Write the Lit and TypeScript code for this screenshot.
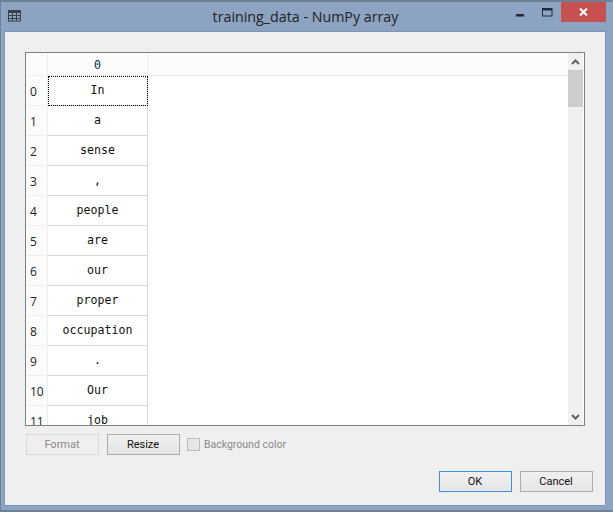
import { LitElement, html, css } from "lit";
import { customElement } from "lit/decorators.js";

const WORDS = ["In", "a", "sense", ",", "people", "are", "our", "proper", "occupation", ".", "Our", "job"];

@customElement("app-root")
export class AppRoot extends LitElement {
  static styles = css`
    :host { display: block; width: 613px; height: 512px; overflow: hidden; font-family: "Open Sans", "Noto Sans", sans-serif; }
    * { box-sizing: border-box; }
    .window { width: 613px; height: 512px; background: #8ca3c1; border: 1px solid #6f7f94; border-top-width: 2px; border-bottom-width: 2px; border-right-color: #8ca3c1; display: flex; flex-direction: column; padding: 0 6px 4px 3px; }
    .titlebar { height: 29px; flex: none; display: flex; align-items: flex-start; position: relative; margin-right: -4px; }
    .appicon { margin: 8px 0 0 3px; display: block; }
    .title { position: absolute; left: 0; right: 0; top: 5px; text-align: center; font-size: 14.25px; line-height: 20px; color: #222; padding-right: 3px; }
    .controls { margin-left: auto; display: flex; align-items: flex-start; margin-right: 4px; }
    .ctl { display: block; }
    .min { margin: 12px 0 0 0; }
    .max { margin: 6px 0 0 18px; }
    .close { width: 45px; height: 20px; margin: 0 0 0 8px; background: #c75050; display: flex; align-items: center; justify-content: center; }
    .client { flex: 1; background: #efefef; border: 1px solid #7f94b3; padding: 20px 20px 0 20px; display: flex; flex-direction: column; min-height: 0; }
    .table { width: 560px; height: 374px; flex: none; background: #fff; border: 1px solid #7c8087; display: flex; overflow: hidden; }
    .grid { flex: 1; display: flex; flex-direction: column; min-width: 0; overflow: hidden; }
    .hrow { height: 23px; flex: none; display: flex; background: #fbfbfb; border-bottom: 1px solid #e9eff6; }
    .corner { width: 22px; flex: none; border-right: 1px solid #e9eff6; }
    .hcell { width: 100px; flex: none; border-right: 1px solid #e9eff6; text-align: center; font: 11.6px/24px "DejaVu Sans Mono", monospace; color: #00313f; }
    .row { height: 30px; flex: none; display: flex; }
    .rhead { width: 22px; flex: none; background: #fbfbfb; border-right: 1px solid #e9eff6; border-bottom: 1px solid #e9eff6; font-size: 12px; line-height: 29px; padding: 1px 0 0 4px; color: #222; }
    .cell { width: 100px; flex: none; border-right: 1px solid #d8d8d8; border-bottom: 1px solid #d8d8d8; text-align: center; font: 11.6px/28px "DejaVu Sans Mono", monospace; color: #111; }
    .cell.cur { outline: 1px dotted #000; outline-offset: -1px; }
    .scroll { width: 15px; flex: none; background: #f0f0f0; display: flex; flex-direction: column; align-items: stretch; margin-right: 1px; }
    .arrow { height: 17px; flex: none; display: flex; align-items: center; justify-content: center; }
    .thumb { height: 37px; flex: none; background: #cdcdcd; }
    .track { flex: 1; }
    .tools { display: flex; align-items: center; margin: 7px 0 0 1px; height: 22px; flex: none; }
    .btn { width: 73px; height: 21px; flex: none; font: 11px/19px Roboto, sans-serif; text-align: center; color: #111; border: 1px solid #adadad; padding-right: 1px; background: linear-gradient(#f0f0f0, #e5e5e5); }
    .btn.dis { color: #8a8a8a; border-color: #d9d9d9; background: #efefef; }
    .btn.def { border-color: #3d8fe6; }
    .resize { margin-left: 8px; }
    .check { width: 13px; height: 13px; flex: none; margin-left: 7px; background: #e6e6e6; border: 1px solid #bcbcbc; }
    .cklabel { margin-left: 4px; font: 10.5px/13px Roboto, sans-serif; color: #8a8a8a; }
    .actions { display: flex; justify-content: flex-end; gap: 8px; margin-top: 16px; margin-right: -8px; }
  `;

  render() {
    return html`<div class="window">
      <div class="titlebar">
        <svg class="appicon" width="14" height="12" viewBox="0 0 14 12" fill="none" stroke="#3a3f47">
          <rect x="1.5" y="0.5" width="12" height="10.5"/><path d="M1 2h13" stroke-width="2"/><path d="M1.5 5.5h12M1.5 8.5h12M5.5 1v10M9.5 1v10"/>
        </svg>
        <div class="title">training_data - NumPy array</div>
        <div class="controls">
          <svg class="ctl min" width="8" height="3"><rect width="8" height="2.5" fill="#222b38"/></svg>
          <svg class="ctl max" width="11" height="9" fill="none" stroke="#222b38"><rect x="0.5" y="0.5" width="9.5" height="7.5"/><path d="M0 1.5h10" stroke-width="2"/></svg>
          <div class="close"><svg width="9" height="8" stroke="#fff" stroke-width="2"><path d="M1 0.5l7 7M8 0.5l-7 7"/></svg></div>
        </div>
      </div>
      <div class="client">
        <div class="table">
          <div class="grid">
            <div class="hrow"><div class="corner"></div><div class="hcell">0</div></div>
            ${WORDS.map((w, i) => html`<div class="row"><div class="rhead">${i}</div><div class="cell ${i === 0 ? "cur" : ""}">${w}</div></div>`)}
          </div>
          <div class="scroll">
            <div class="arrow"><svg width="9" height="6" fill="none" stroke="#606060" stroke-width="2"><path d="M1 5l3.5-3.5L8 5"/></svg></div>
            <div class="thumb"></div>
            <div class="track"></div>
            <div class="arrow"><svg width="9" height="6" fill="none" stroke="#606060" stroke-width="2"><path d="M1 1l3.5 3.5L8 1"/></svg></div>
          </div>
        </div>
        <div class="tools">
          <div class="btn dis">Format</div>
          <div class="btn resize">Resize</div>
          <div class="check"></div>
          <div class="cklabel">Background color</div>
        </div>
        <div class="actions">
          <div class="btn def">OK</div>
          <div class="btn">Cancel</div>
        </div>
      </div>
    </div>`;
  }
}
